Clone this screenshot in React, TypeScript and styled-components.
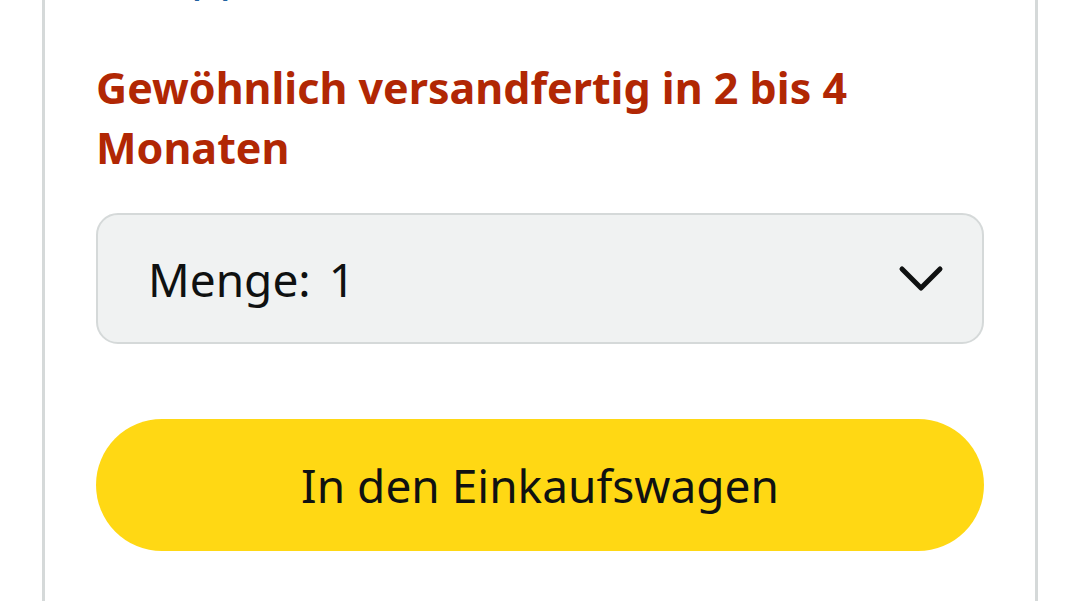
import React from 'react';
import styled, { createGlobalStyle } from 'styled-components';

const GlobalStyle = createGlobalStyle`
  html, body {
    margin: 0;
    padding: 0;
    background: #ffffff;
    overflow: hidden;
  }
  body {
    font-family: 'Noto Sans', 'Open Sans', Arial, sans-serif;
    color: #0f1111;
  }
`;

const Page = styled.div`
  width: 1080px;
  height: 601px;
  overflow: hidden;
  background: #ffffff;
`;

const Card = styled.div`
  margin: 0 42px;
  height: 601px;
  border-left: 3px solid #d5d9d9;
  border-right: 3px solid #d5d9d9;
  padding: 0 51px;
  box-sizing: border-box;
  overflow: hidden;
`;

const CutLink = styled.a`
  display: block;
  padding-left: 14px;
  font-size: 46px;
  line-height: 60px;
  color: #2162a1;
  text-decoration: none;
  margin-top: -58px;
  height: 60px;
`;

const Availability = styled.div`
  margin-top: 56px;
  font-size: 43px;
  font-weight: 700;
  line-height: 60px;
  color: #b12704;
`;

const QuantitySelect = styled.button`
  margin-top: 35px;
  width: 100%;
  height: 131px;
  box-sizing: border-box;
  display: flex;
  align-items: center;
  justify-content: space-between;
  padding: 0 38px 0 50px;
  background: #f0f2f2;
  border: 2px solid #d5d9d9;
  border-radius: 22px;
  font-family: inherit;
  font-size: 46px;
  color: #0f1111;
  cursor: pointer;
`;

const QuantityLabel = styled.span`
  display: flex;
  gap: 18px;
`;

const Chevron = styled.svg`
  width: 46px;
  height: 30px;
  display: block;
`;

const CartButton = styled.button`
  margin-top: 75px;
  width: 100%;
  height: 132px;
  border: none;
  border-radius: 66px;
  background: #ffd814;
  font-family: inherit;
  font-size: 46px;
  color: #0f1111;
  cursor: pointer;
`;

const App: React.FC = () => {
  return (
    <Page>
      <GlobalStyle />
      <Card>
        <CutLink href="#">Gruppe</CutLink>
        <Availability>
          Gewöhnlich versandfertig in 2 bis 4
          <br />
          Monaten
        </Availability>
        <QuantitySelect type="button">
          <QuantityLabel>
            <span>Menge:</span>
            <span>1</span>
          </QuantityLabel>
          <Chevron viewBox="0 0 46 30">
            <path
              d="M4 5 L23 24 L42 5"
              fill="none"
              stroke="#0f1111"
              strokeWidth="5"
              strokeLinecap="round"
              strokeLinejoin="round"
            />
          </Chevron>
        </QuantitySelect>
        <CartButton type="button">In den Einkaufswagen</CartButton>
      </Card>
    </Page>
  );
};

export default App;
